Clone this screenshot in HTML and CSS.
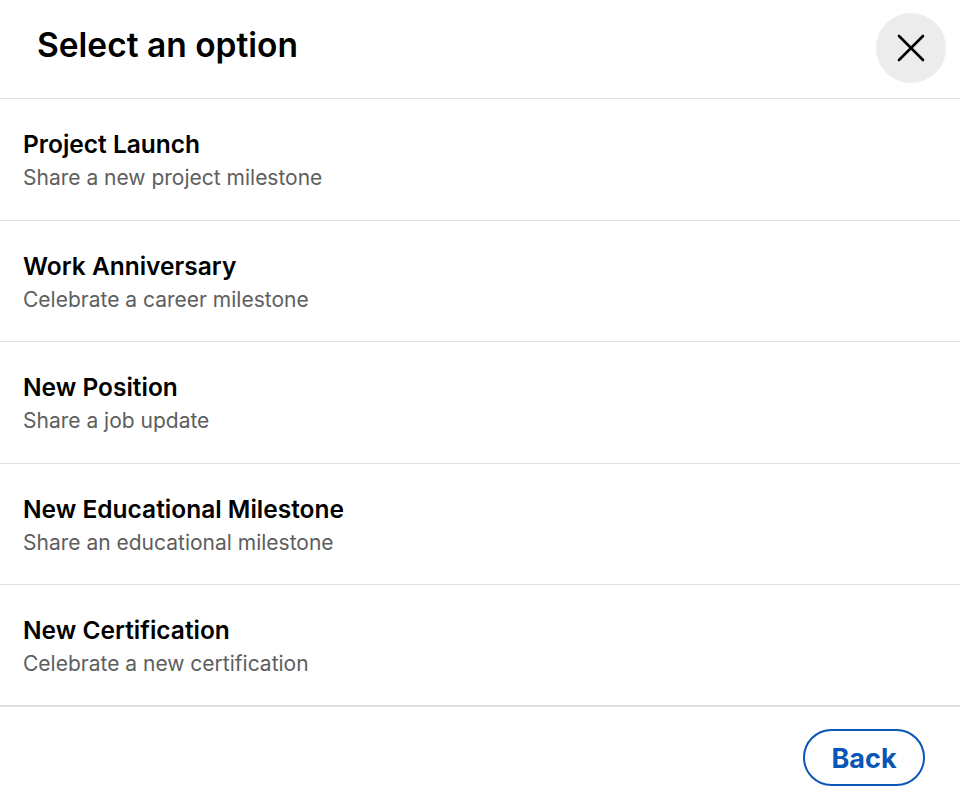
FILE: index.html
```html
<!DOCTYPE html>
<html lang="en">
<head>
    <meta charset="UTF-8">
    <meta name="viewport" content="width=device-width, initial-scale=1.0">
    <title>Select an option</title>
    <link rel="stylesheet" href="styles.css">
</head>
<body>
    <div class="modal">
        <div class="modal-head">
            <h2>Select an option</h2>
            <button class="btn-close" aria-label="Dismiss">
                <svg width="28" height="28" viewBox="0 0 28 28">
                    <path d="M2 2L26 26M26 2L2 26" stroke="#000" stroke-width="2.6" stroke-linecap="round"/>
                </svg>
            </button>
        </div>
        <ul class="options">
            <li>
                <h3>Project Launch</h3>
                <p>Share a new project milestone</p>
            </li>
            <li>
                <h3>Work Anniversary</h3>
                <p>Celebrate a career milestone</p>
            </li>
            <li>
                <h3>New Position</h3>
                <p>Share a job update</p>
            </li>
            <li>
                <h3>New Educational Milestone</h3>
                <p>Share an educational milestone</p>
            </li>
            <li>
                <h3>New Certification</h3>
                <p>Celebrate a new certification</p>
            </li>
        </ul>
        <div class="modal-foot">
            <button class="btn-back">Back</button>
        </div>
    </div>
</body>
</html>
```

FILE: styles.css
```css
*{padding:0;margin:0;box-sizing:border-box}
li{list-style:none}
body{
    background:#fff;
    font-family:Inter,"Noto Sans",sans-serif;
    color:#000;
}
.modal{
    width:960px;
    height:805px;
}
.modal-head{
    height:99px;
    display:flex;
    justify-content:space-between;
    align-items:flex-start;
    padding:13px 14px 0 37px;
    border-bottom:1px solid #e0e0e0;
}
.modal-head h2{
    font-size:33.5px;
    font-weight:600;
    line-height:40px;
    margin-top:12px;
}
.btn-close{
    width:70px;
    height:70px;
    border:none;
    border-radius:50%;
    background:#ececec;
    display:flex;
    align-items:center;
    justify-content:center;
    cursor:pointer;
}
.options li{
    height:121.5px;
    padding:29px 23px 0;
    border-bottom:1px solid #e0e0e0;
}
.options li:last-child{
    border-bottom:2px solid #e0e0e0;
}
.options h3{
    font-size:24.5px;
    font-weight:600;
    line-height:33px;
}
.options p{
    font-size:21px;
    font-weight:400;
    line-height:33px;
    color:#5e5e5e;
}
.modal-foot{
    display:flex;
    justify-content:flex-end;
    padding:22px 35px 0;
}
.btn-back{
    width:122px;
    height:57px;
    padding-top:2px;
    border:2px solid #0a56b8;
    border-radius:29px;
    background:#fff;
    color:#0a56b8;
    font-family:Inter,"Noto Sans",sans-serif;
    font-size:27px;
    font-weight:700;
    cursor:pointer;
}
```
